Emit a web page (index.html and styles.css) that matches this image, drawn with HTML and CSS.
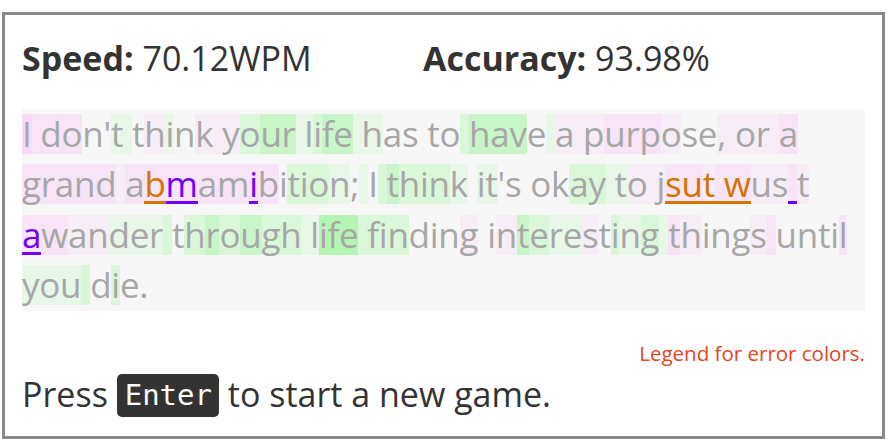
FILE: index.html
```html
<!DOCTYPE html>
<html>
<head>
<meta charset="utf-8">
<link rel="stylesheet" href="styles.css">
</head>
<body>
<div class="box">
  <div class="stats">
    <div class="stat"><b>Speed:</b> 70.12WPM</div>
    <div class="stat"><b>Accuracy:</b> 93.98%</div>
  </div>
  <div class="passage">
    <div class="line"><span class="c p3">I</span><span class="c p2"> do</span><span class="c">n'</span><span class="c g1">t </span><span class="c">t</span><span class="c p1">h</span><span class="c g1">i</span><span class="c">n</span><span class="c p1">k y</span><span class="c g2">o</span><span class="c g3">ur</span><span class="c g1"> l</span><span class="c g2">i</span><span class="c g3">fe</span><span class="c g1"> h</span><span class="c">as to</span><span class="c g2"> </span><span class="c g3">hav</span><span class="c">e</span><span class="c g1"> </span><span class="c p1">a p</span><span class="c p2">urp</span><span class="c p1">o</span><span class="c">se</span><span class="c p1">, or </span><span class="c p2">a</span></div>
    <div class="line"><span class="c p2">grand</span><span class="c p1"> </span><span class="c p2">a</span><span class="c p2 eo">b</span><span class="c p2 ep">m</span><span class="c p2">am</span><span class="c p2 ep">i</span><span class="c p2">b</span><span class="c">i</span><span class="c g2">tio</span><span class="c g1">n</span><span class="c">;</span><span class="c g1"> </span><span class="c">I</span><span class="c g2"> </span><span class="c g3">t</span><span class="c g2">hin</span><span class="c g1">k</span><span class="c"> </span><span class="c g1">it</span><span class="c">'s ok</span><span class="c g2">ay</span><span class="c g1"> t</span><span class="c p1">o j</span><span class="c p2 eo">su</span><span class="c p1 eo">t</span><span class="c p2 eo"> w</span><span class="c p1">us</span><span class="c p2 eps"> </span><span class="c p1">t</span></div>
    <div class="line"><span class="c p2 ep">a</span><span class="c p2">w</span><span class="c p1">an</span><span class="c g1">der</span><span class="c g2"> </span><span class="c">t</span><span class="c g2">h</span><span class="c g3">r</span><span class="c g2">o</span><span class="c g3">u</span><span class="c g2">gh</span><span class="c g1"> l</span><span class="c g4">ife</span><span class="c g2"> </span><span class="c g2">fin</span><span class="c">din</span><span class="c p1">g</span><span class="c"> i</span><span class="c p1">n</span><span class="c g3">t</span><span class="c g2">e</span><span class="c g1">re</span><span class="c p1">s</span><span class="c">t</span><span class="c g2">i</span><span class="c g1">n</span><span class="c g2">g</span><span class="c g1"> </span><span class="c p2">t</span><span class="c p1">h</span><span class="c">ing</span><span class="c p1">s</span><span class="c p2"> </span><span class="c">unti</span><span class="c p2">l</span></div>
    <div class="line"><span class="c g1">you</span><span class="c g2"> </span><span class="c">d</span><span class="c g2">i</span><span class="c">e.</span></div>
  </div>
  <div class="legend">Legend for error colors.</div>
  <div class="press">Press <kbd class="key">Enter</kbd> to start a new game.</div>
</div>
</body>
</html>
```

FILE: styles.css
```css
html, body {
  margin: 0;
  padding: 0;
  background: #fff;
}

.box {
  box-sizing: border-box;
  margin: 12px 5px 0 2px;
  width: 883px;
  height: 427px;
  border: 3px solid #888;
  padding: 19px 17px 0 17px;
  font-family: "Open Sans", sans-serif;
  color: #333;
}

.stats {
  display: grid;
  grid-template-columns: 401px auto;
  font-size: 34px;
  line-height: 48px;
}

.stat b {
  font-weight: 700;
}

.passage {
  margin-top: 27px;
  background: #f7f7f7;
  color: #a7a7a7;
  font-size: 35px;
  letter-spacing: -0.25px;
}

.line {
  height: 50.4px;
  line-height: 50.4px;
  white-space: nowrap;
}

.c {
  display: inline-block;
  line-height: 40px;
  white-space: pre;
  vertical-align: baseline;
}

.p1 { background: #f6edf6; }
.p2 { background: #f7e4f7; }
.p3 { background: #f5dbf5; }
.g1 { background: #e8f7e8; }
.g2 { background: #daf7da; }
.g3 { background: #c9f6c9; }
.g4 { background: #b4f5b4; }

.eo {
  color: #d27500;
  box-shadow: inset 0 -3px 0 #d27500;
}

.ep {
  color: #7300ff;
  box-shadow: inset 0 -3px 0 #7300ff;
}

.eps {
  box-shadow: inset 0 -3px 0 #7300ff;
}

.legend {
  margin-top: 28px;
  text-align: right;
  font-size: 20.5px;
  line-height: 28px;
  color: #e5461c;
}

.press {
  margin-top: 3px;
  font-size: 34px;
  line-height: 48px;
}

.key {
  display: inline-block;
  background: #333;
  color: #fff;
  border-radius: 5px;
  font-family: "DejaVu Sans Mono", monospace;
  font-size: 29px;
  line-height: 43px;
  padding: 0 7px 0 8px;
  vertical-align: 2px;
}
```
